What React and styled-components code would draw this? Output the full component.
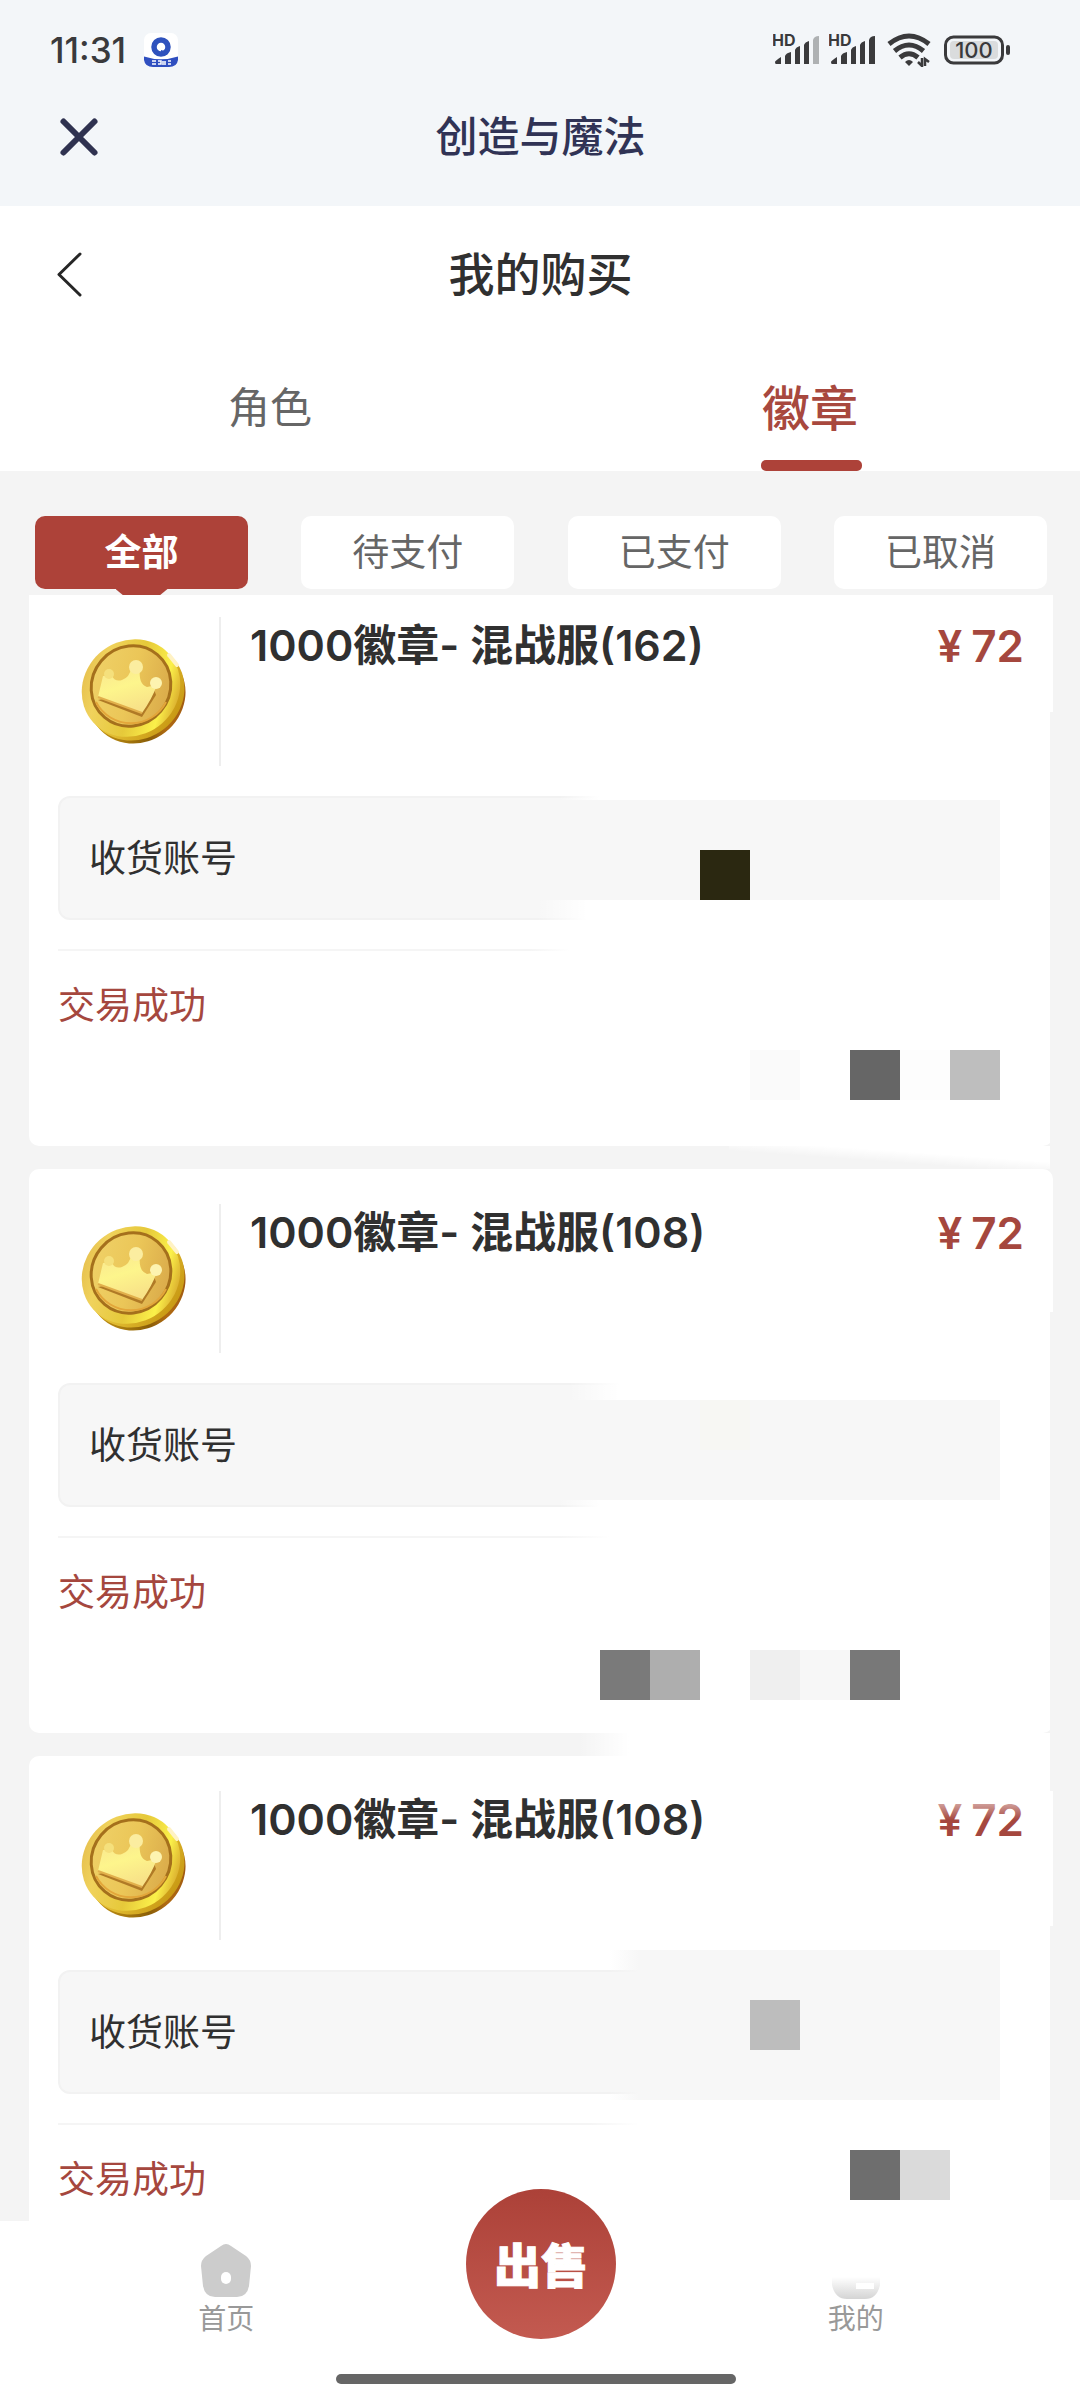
import React, { useState } from 'react';
import styled, { createGlobalStyle, css } from 'styled-components';

const GlobalStyle = createGlobalStyle`
  * {
    box-sizing: border-box;
  }

  body {
    margin: 0;
    background: #f4f4f4;
    color: #303030;
    font-family: Inter, 'Noto Sans CJK SC', sans-serif;
  }

  button {
    padding: 0;
    border: none;
    background: transparent;
    font-family: inherit;
    cursor: pointer;
  }
`;

const Page = styled.div`
  display: flex;
  flex-direction: column;
  height: 100vh;
  overflow: hidden;
`;

const Header = styled.header`
  flex: none;
  padding-bottom: 32px;
  background: #f3f6f9;
`;

const StatusBar = styled.div`
  display: flex;
  align-items: center;
  height: 100px;
  padding: 0 70px 0 50px;
  color: #3a3a3c;
`;

const Clock = styled.span`
  margin-right: 17px;
  font-size: 35px;
  font-weight: 500;
`;

const StatusIcons = styled.div`
  display: flex;
  align-items: center;
  gap: 9px;
  margin-left: auto;
`;

const Bar = styled.div`
  display: grid;
  grid-template-columns: 1fr auto 1fr;
  align-items: center;
  height: ${(props) => props.$height}px;
  padding: 0 55px 0 56px;
`;

const IconButton = styled.button`
  display: flex;
  justify-self: start;
`;

const AppName = styled.h1`
  margin: 0;
  font-size: 42px;
  font-weight: 500;
  line-height: 60px;
  color: #303355;
`;

const PageTitle = styled.h2`
  margin: 0;
  font-size: 46px;
  font-weight: 500;
  line-height: 60px;
  color: #303030;
`;

const TopPanel = styled.div`
  flex: none;
  background: #fff;
`;

const Tabs = styled.div`
  display: grid;
  grid-template-columns: 1fr 1fr;
`;

const Tab = styled.button`
  position: relative;
  height: 129px;
  padding-bottom: 4px;
  font-size: ${(props) => (props.$active ? 48 : 42)}px;
  font-weight: ${(props) => (props.$active ? 500 : 400)};
  color: ${(props) => (props.$active ? '#a8483e' : '#666')};

  ${(props) =>
    props.$active &&
    css`
      &::after {
        content: '';
        position: absolute;
        bottom: 0;
        left: 50%;
        width: 101px;
        height: 11px;
        margin-left: -49px;
        border-radius: 5px;
        background: #ad4239;
      }
    `}
`;

const Filters = styled.div`
  display: flex;
  flex: none;
  justify-content: space-between;
  padding: 45px 33px 6px 35px;
`;

const Filter = styled.button`
  position: relative;
  width: 213px;
  height: 73px;
  padding-bottom: 5px;
  border-radius: 10px;
  font-size: 37px;
  font-weight: ${(props) => (props.$active ? 700 : 400)};
  color: ${(props) => (props.$active ? '#fff' : '#666')};
  background: ${(props) => (props.$active ? '#ad4239' : '#fff')};

  ${(props) =>
    props.$active &&
    css`
      &::after {
        content: '';
        position: absolute;
        top: 100%;
        left: 50%;
        width: 52px;
        height: 6px;
        margin-left: -26px;
        background: #ad4239;
        clip-path: polygon(0 0, 100% 0, 86% 100%, 14% 100%);
      }
    `}
`;

const Viewport = styled.main`
  flex: 1;
  min-height: 0;
  overflow: hidden;
`;

/* the list is scrolled a little under the filters */
const List = styled.div`
  display: flex;
  flex-direction: column;
  gap: 23px;
  margin-top: -13px;
  padding: 0 27px 0 29px;
`;

const Card = styled.article`
  position: relative;
  flex: none;
  height: 564px;
  padding: 35px 29px 0;
  border-radius: 10px;
  background: #fff;
`;

const Summary = styled.div`
  display: flex;
  align-items: center;
  height: 149px;
`;

const CoinBox = styled.div`
  display: flex;
  flex: none;
  align-items: center;
  justify-content: center;
  width: 163px;
  height: 100%;
  padding-right: 12px;
  border-right: 2px solid #eee;
`;

const Line = styled.div`
  display: flex;
  flex: 1;
  align-self: flex-start;
  justify-content: space-between;
  padding-left: 29px;
  font-size: 43px;
  font-weight: 500;
  line-height: 56px;
`;

const Name = styled.h3`
  margin: 0;
  font-size: inherit;
  font-weight: 600;
`;

const Price = styled.span`
  display: flex;
  gap: 9px;
  font-size: 44px;
  font-weight: 600;
  line-height: 58px;
  color: #a5473e;
`;

const Account = styled.div`
  display: flex;
  align-items: center;
  height: 124px;
  margin: 30px 0 29px;
  padding: 0 29px 4px;
  border: 2px solid #f2f2f2;
  border-radius: 12px;
  font-size: 37px;
  background: #f7f7f7;
`;

const State = styled.p`
  margin: 0;
  padding-top: 27px;
  border-top: 2px solid #f5f5f5;
  font-size: 37px;
  line-height: 56px;
  color: #a5473e;
`;

const Patch = styled.span`
  position: absolute;
  left: ${(props) => props.$x}px;
  top: ${(props) => props.$y}px;
  width: ${(props) => props.$w || 50}px;
  height: ${(props) => props.$h || 50}px;
  background: ${(props) =>
    props.$fade
      ? `linear-gradient(to right, transparent, ${props.$color} ${props.$fade}px)`
      : props.$color};
`;

const Nav = styled.nav`
  position: relative;
  display: grid;
  flex: none;
  grid-template-columns: repeat(3, 1fr);
  height: 179px;
  padding: 20px 67px 0 69px;
  background: #fff;
`;

const NavLink = styled.a`
  display: flex;
  flex-direction: column;
  align-items: center;
  font-size: 28px;
  line-height: 36px;
  color: #999;
  text-decoration: none;
`;

const SellButton = styled.button`
  justify-self: center;
  width: 150px;
  height: 150px;
  margin-top: -52px;
  padding-bottom: 4px;
  border-radius: 50%;
  background: linear-gradient(#ac4138, #c35a50);
  color: #fff;
  font-size: 47px;
  font-weight: 900;
  -webkit-text-stroke: 1px #fff;
`;

const HomeIndicator = styled.span`
  position: absolute;
  bottom: 16px;
  left: 50%;
  width: 400px;
  height: 10px;
  margin-left: -204px;
  border-radius: 5px;
  background: #666;
`;

const AppBadge = () => (
  <svg width='36' height='36' viewBox='0 0 36 36'>
    <rect x='1' y='1' width='34' height='34' rx='7' fill='#fff' />
    <path d='M1 24.500 Q18 30 35 24.500 V28 Q34 35 26 35 H10 Q2 35 1 28 Z' fill='#2f4fc0' />
    <circle cx='18' cy='15' r='7' fill='none' stroke='#2f52bd' strokeWidth='5.500' />
    <path d='M18 18 L25 20 L24 23 L18 22 Z' fill='#2f52bd' />
    <path
      d='M9 29h4M9 32h4M15 29h3v3h-3M20 29v4M22 29v4M25 29h3M25 32h3'
      stroke='#fff'
      strokeWidth='1.500'
      fill='none'
    />
  </svg>
);

const Signal = ({ weak }) => (
  <svg width='47' height='44' viewBox='0 -6 47 44'>
    <text x='-1' y='12' fontSize='16' fontWeight='700' fill='#3a3a3c'>
      HD
    </text>
    <path
      d='M2 28 Q2 27 8 23 V30 H3 Q2 30 2 28Z M12 22 Q13 19 18 18 V30 H12Z M22 16 Q23 13 27 12 V30 H22Z M31 11 Q32 8 36 7 V30 H31Z'
      fill='#3a3a3c'
    />
    <path d='M40 6 Q41 2 46 2 V30 H40Z' fill={weak ? '#aeb1b3' : '#3a3a3c'} />
  </svg>
);

const Wifi = () => (
  <svg width='48' height='34' viewBox='-3 0 48 34'>
    <g fill='none' stroke='#3a3a3c' strokeWidth='5'>
      <path d='M1 11 Q21 -5 41 11' />
      <path d='M6.500 18 Q21 6 35.500 18' />
      <path d='M12 24.500 Q21 17 30 24.500' />
    </g>
    <path d='M17 29 Q21 25 25 29 L21 33 Z' fill='#3a3a3c' />
    <path d='M34 25 V33 L30 29 M37 33 V26 L41 29' fill='none' stroke='#3a3a3c' strokeWidth='2.500' />
  </svg>
);

const Battery = () => (
  <svg width='68' height='30' viewBox='-2 0 68 30'>
    <rect x='1.500' y='2' width='57' height='26' rx='8' fill='none' stroke='#3a3a3c' strokeWidth='3' />
    <rect x='6' y='6' width='48' height='18' rx='4' fill='#dadcdd' />
    <rect x='62' y='10' width='4' height='10' rx='2' fill='#3a3a3c' />
    <text x='30' y='23' fontSize='22' fontWeight='500' textAnchor='middle' fill='#3a3a3c'>
      100
    </text>
  </svg>
);

const CloseIcon = () => (
  <svg width='46' height='46' viewBox='0 0 46 46'>
    <path d='M7.500 7.500 L38.500 38.500 M38.500 7.500 L7.500 38.500' stroke='#2f3250' strokeWidth='6' strokeLinecap='round' />
  </svg>
);

const BackIcon = () => (
  <svg width='28' height='48' viewBox='0 0 28 48'>
    <path d='M24 4 L3 24.500 L24 45' fill='none' stroke='#262626' strokeWidth='3' strokeLinecap='round' strokeLinejoin='round' />
  </svg>
);

const Coin = () => (
  <svg width='106' height='106' viewBox='0 0 106 106'>
    <defs>
      <linearGradient id='coin-side' x1='0' y1='0.700' x2='1' y2='0.800'>
        <stop offset='0' stopColor='#b98a12' />
        <stop offset='0.350' stopColor='#8a5e08' />
        <stop offset='0.550' stopColor='#b06a12' />
        <stop offset='1' stopColor='#9a5410' />
      </linearGradient>
      <linearGradient id='coin-edge' x1='0.200' y1='0' x2='0.600' y2='1'>
        <stop offset='0' stopColor='#d9a93c' />
        <stop offset='0.450' stopColor='#e8c53a' />
        <stop offset='1' stopColor='#c99a14' />
      </linearGradient>
      <linearGradient id='coin-rim' x1='0' y1='0' x2='0.700' y2='1'>
        <stop offset='0' stopColor='#dfb245' />
        <stop offset='0.300' stopColor='#f0d25c' />
        <stop offset='0.600' stopColor='#e6c93a' />
        <stop offset='0.850' stopColor='#fbf04a' />
        <stop offset='1' stopColor='#d8a92c' />
      </linearGradient>
      <linearGradient id='coin-face' x1='0' y1='0' x2='0.500' y2='1'>
        <stop offset='0' stopColor='#f0d36a' />
        <stop offset='0.600' stopColor='#ebc658' />
        <stop offset='1' stopColor='#dcae4c' />
      </linearGradient>
      <linearGradient id='coin-crown' x1='0' y1='0' x2='0.400' y2='1'>
        <stop offset='0' stopColor='#f9e690' />
        <stop offset='0.500' stopColor='#fdf58c' />
        <stop offset='1' stopColor='#f8e288' />
      </linearGradient>
    </defs>
    <ellipse cx='57' cy='57' rx='50' ry='46' transform='rotate(-38 57 57)' fill='url(#coin-side)' />
    <ellipse cx='55' cy='53' rx='51' ry='47' transform='rotate(-38 55 53)' fill='url(#coin-edge)' />
    <ellipse cx='51' cy='49' rx='51' ry='47' transform='rotate(-42 51 49)' fill='url(#coin-rim)' />
    <ellipse cx='51' cy='47' rx='41' ry='39' transform='rotate(-50 51 47)' fill='url(#coin-face)' stroke='#a5701c' strokeWidth='3' />
    <path d='M16 63 A39 38 0 0 0 86 63' fill='none' stroke='#e3a63a' strokeWidth='2' />
    <path d='M18 61 L62 78 L76 56 L74 50 Z' fill='#b07a26' />
    <path
      d='M18 58 L23 37 L32 37 Q35 43 42 41 Q50 38 51 29 L60 29 Q58 45 67 48 L77 46 Q72 60 62 74 Z'
      fill='url(#coin-crown)'
    />
    <path d='M18 58 L62 74' fill='none' stroke='#e2b04c' strokeWidth='2' />
    <circle cx='29' cy='35' r='5' fill='#f5e07c' />
    <circle cx='56' cy='28' r='7' fill='#fbeda0' />
    <circle cx='76' cy='44' r='6' fill='#fdf3b0' />
    <path d='M89 16 L97 26' stroke='#fff2c4' strokeWidth='4' strokeLinecap='round' />
  </svg>
);

const HomeIcon = () => (
  <svg width='52' height='60' viewBox='0 0 52 60'>
    <path
      d='M21 5 Q26 1 31 5 L46 15 Q51 19 51 25 L49 45 Q47 56 37 56 H15 Q5 56 3 45 L1 25 Q1 19 6 15 Z'
      fill='#ccc'
    />
    <rect x='21' y='31' width='10' height='12' rx='5' fill='#fff' />
  </svg>
);

const MineIcon = () => (
  <svg width='52' height='60' viewBox='0 0 52 60'>
    <defs>
      <linearGradient id='mine-fade' x1='0' y1='0' x2='0' y2='1'>
        <stop offset='0' stopColor='#fff' />
        <stop offset='1' stopColor='#d4d4d4' />
      </linearGradient>
    </defs>
    <path d='M2 36 H50 V44 Q47 58 35 58 H17 Q5 58 2 44 Z' fill='url(#mine-fade)' />
    <rect x='26' y='42' width='18' height='6' fill='#fff' />
  </svg>
);

const orders = [
  {
    id: 1,
    name: '1000徽章- 混战服(162)',
    price: 72,
    masks: [
      { x: 530, y: 212, w: 470, h: 6, color: '#fff', fade: 40 },
      { x: 508, y: 318, w: 490, h: 22, color: '#fff', fade: 50 },
      { x: 971, y: 210, w: 40, h: 130, color: '#fff' },
      { x: 500, y: 366, w: 500, h: 6, color: '#fff', fade: 40 },
      { x: 671, y: 268, color: '#2b2811' },
      { x: 721, y: 468, color: '#fafafa' },
      { x: 821, y: 468, color: '#666' },
      { x: 871, y: 468, color: '#fdfdfd' },
      { x: 921, y: 468, color: '#bebebe' },
      { x: 1021, y: 130, w: 3, h: 434, color: '#f4f4f4' },
      {
        x: 700,
        y: 564,
        w: 321,
        h: 23,
        color: 'linear-gradient(to top right, transparent 40%, #fff 65%)',
      },
    ],
  },
  {
    id: 2,
    name: '1000徽章- 混战服(108)',
    price: 72,
    masks: [
      { x: 540, y: 212, w: 470, h: 19, color: '#fff', fade: 50 },
      { x: 530, y: 331, w: 470, h: 9, color: '#fff', fade: 40 },
      { x: 971, y: 210, w: 40, h: 130, color: '#fff' },
      { x: 530, y: 366, w: 470, h: 6, color: '#fff', fade: 50 },
      { x: 671, y: 231, color: '#f7f7f3' },
      { x: 571, y: 481, color: '#7a7a7a' },
      { x: 621, y: 481, color: '#aeaeae' },
      { x: 721, y: 481, color: '#efefef' },
      { x: 771, y: 481, color: '#f7f7f7' },
      { x: 821, y: 481, color: '#787878' },
      { x: 1021, y: 143, w: 3, h: 421, color: '#f4f4f4' },
      { x: 550, y: 564, w: 471, h: 23, color: '#fff', fade: 50 },
    ],
  },
  {
    id: 3,
    name: '1000徽章- 混战服(108)',
    price: 72,
    masks: [
      { x: 580, y: 194, w: 391, h: 150, color: '#f7f7f7', fade: 30 },
      { x: 971, y: 210, w: 40, h: 130, color: '#fff' },
      { x: 560, y: 366, w: 440, h: 6, color: '#fff', fade: 50 },
      { x: 721, y: 244, color: '#bdbdbd' },
      { x: 821, y: 394, color: '#6e6e6e' },
      { x: 871, y: 394, color: '#dadada' },
      { x: 900, y: 40, w: 100, h: 24, color: 'linear-gradient(rgba(255, 255, 255, 0.7), transparent)' },
      { x: 1000, y: 0, w: 21, h: 20, color: '#fff' },
      { x: 1021, y: 0, w: 3, h: 35, color: '#f4f4f4' },
      { x: 1021, y: 170, w: 3, h: 274, color: '#f4f4f4' },
      { x: 1021, y: 444, w: 30, h: 21, color: '#fff' },
    ],
  },
];

const tabs = ['角色', '徽章'];
const filters = ['全部', '待支付', '已支付', '已取消'];

const Order = ({ order }) => (
  <Card>
    <Summary>
      <CoinBox>
        <Coin />
      </CoinBox>
      <Line>
        <Name>{order.name}</Name>
        <Price>
          <span>¥</span>
          <span>{order.price}</span>
        </Price>
      </Line>
    </Summary>
    <Account>收货账号</Account>
    <State>交易成功</State>
    {order.masks.map((m, i) => (
      <Patch key={i} $x={m.x} $y={m.y} $w={m.w} $h={m.h} $color={m.color} $fade={m.fade} />
    ))}
  </Card>
);

const App = () => {
  const [tab, setTab] = useState('徽章');
  const [filter, setFilter] = useState('全部');

  return (
    <Page>
      <GlobalStyle />
      <Header>
        <StatusBar>
          <Clock>11:31</Clock>
          <AppBadge />
          <StatusIcons>
            <Signal weak />
            <Signal />
            <Wifi />
            <Battery />
          </StatusIcons>
        </StatusBar>
        <Bar $height={74}>
          <IconButton aria-label='关闭'>
            <CloseIcon />
          </IconButton>
          <AppName>创造与魔法</AppName>
        </Bar>
      </Header>
      <TopPanel>
        <Bar $height={136}>
          <IconButton aria-label='返回'>
            <BackIcon />
          </IconButton>
          <PageTitle>我的购买</PageTitle>
        </Bar>
        <Tabs>
          {tabs.map((name) => (
            <Tab key={name} $active={tab === name} onClick={() => setTab(name)}>
              {name}
            </Tab>
          ))}
        </Tabs>
      </TopPanel>
      <Filters>
        {filters.map((name) => (
          <Filter key={name} $active={filter === name} onClick={() => setFilter(name)}>
            {name}
          </Filter>
        ))}
      </Filters>
      <Viewport>
        <List>
          {orders.map((order) => (
            <Order key={order.id} order={order} />
          ))}
        </List>
      </Viewport>
      <Nav>
        <NavLink href='#home'>
          <HomeIcon />
          首页
        </NavLink>
        <SellButton>出售</SellButton>
        <NavLink href='#mine'>
          <MineIcon />
          我的
        </NavLink>
        <HomeIndicator />
      </Nav>
    </Page>
  );
};

export default App;
